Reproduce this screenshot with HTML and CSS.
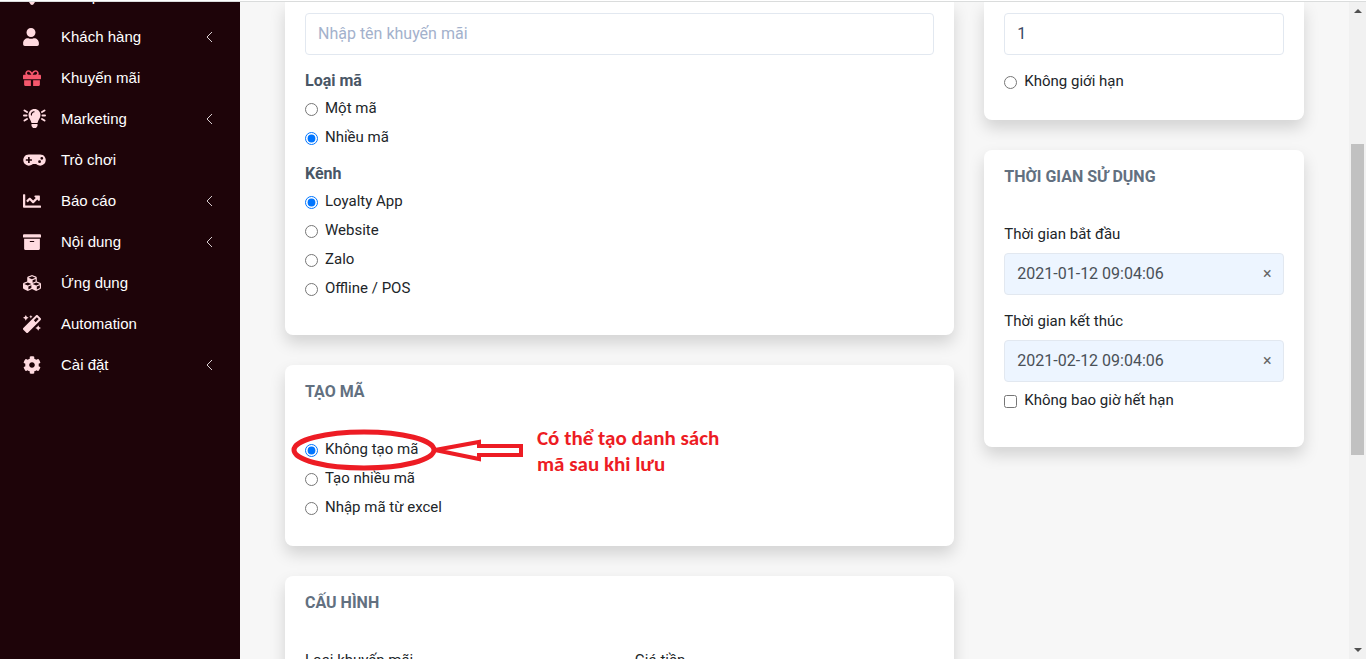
FILE: index.html
```html
<!DOCTYPE html>
<html lang="vi">
<head>
    <meta charset="UTF-8">
    <meta name="viewport" content="width=device-width, initial-scale=1.0">
    <title>Khuyến mãi</title>
    <link rel="stylesheet" href="styles.css">
</head>
<body>

    <div class="page">
        <nav class="sidebar">
            <ul class="menu">
                <li><a href="#">
                    <svg class="icon" width="18" height="18" viewBox="0 0 512 512"><path d="M256 0l256 180-220 320c-18 16-54 16-72 0L0 180z"/></svg>
                    <span>Sản phẩm</span>
                </a></li>
                <li><a href="#">
                    <svg class="icon" width="16" height="18" viewBox="0 0 448 512"><path d="M224 256c70.7 0 128-57.3 128-128S294.7 0 224 0 96 57.3 96 128s57.3 128 128 128zm89.6 32h-16.7c-22.2 10.2-46.9 16-72.9 16s-50.6-5.8-72.9-16h-16.7C60.2 288 0 348.2 0 422.4V464c0 26.5 21.5 48 48 48h352c26.5 0 48-21.5 48-48v-41.6c0-74.2-60.2-134.4-134.4-134.4z"/></svg>
                    <span>Khách hàng</span>
                    <svg class="arrow" width="8" height="12" viewBox="0 0 8 12"><path d="M7 1L2 6l5 5"/></svg>
                </a></li>
                <li class="active"><a href="#">
                    <svg class="icon" width="18" height="18" viewBox="0 0 512 512"><path d="M32 448c0 17.7 14.3 32 32 32h160V320H32v128zm256 32h160c17.7 0 32-14.3 32-32V320H288v160zm192-320h-42.1c6.2-12.1 10.1-25.5 10.1-40 0-48.5-39.5-88-88-88-41.6 0-68.5 21.3-103 68.3-34.5-47-61.4-68.3-103-68.3-48.5 0-88 39.5-88 88 0 14.5 3.8 27.9 10.1 40H32c-17.7 0-32 14.3-32 32v80c0 8.8 7.2 16 16 16h480c8.8 0 16-7.2 16-16v-80c0-17.7-14.3-32-32-32zm-326.1 0c-22.1 0-40-17.9-40-40s17.9-40 40-40c19.9 0 34.6 3.3 86.1 80h-86.1zm206.1 0h-86.1c51.4-76.5 65.7-80 86.1-80 22.1 0 40 17.9 40 40s-17.9 40-40 40z"/></svg>
                    <span>Khuyến mãi</span>
                </a></li>
                <li><a href="#">
                    <svg class="icon" width="23" height="19" viewBox="0 0 23 19"><path d="M11.500 0C8 0 5.500 2.700 5.500 6c0 3.300 2.500 5 3 8h6c.5-3 3-4.700 3-8 0-3.300-2.500-6-6-6zM8 6.500C7.300 4 9 2.200 11.500 2.200v1C9.700 3.200 8.700 4.500 9 6.500zM8.500 15h6v2l-1.500 2h-3L8.500 17z"/><path class="rays" d="M1 6.500h2.500M19.500 6.500H22M1.500 1.500l2.500 1.500M21.500 1.500L19 3M1.500 11.500L4 10M21.500 11.500L19 10"/></svg>
                    <span>Marketing</span>
                    <svg class="arrow" width="8" height="12" viewBox="0 0 8 12"><path d="M7 1L2 6l5 5"/></svg>
                </a></li>
                <li><a href="#">
                    <svg class="icon" width="23" height="18" viewBox="0 0 640 512"><path d="M480 96H160a160 160 0 1 0 114.240 272h91.5A160 160 0 1 0 480 96zM248 268a12 12 0 0 1-12 12h-52v52a12 12 0 0 1-12 12h-24a12 12 0 0 1-12-12v-52H84a12 12 0 0 1-12-12v-24a12 12 0 0 1 12-12h52v-52a12 12 0 0 1 12-12h24a12 12 0 0 1 12 12v52h52a12 12 0 0 1 12 12zm216 76a40 40 0 1 1 40-40 40 40 0 0 1-40 40zm64-96a40 40 0 1 1 40-40 40 40 0 0 1-40 40z"/></svg>
                    <span>Trò chơi</span>
                </a></li>
                <li><a href="#">
                    <svg class="icon" width="18" height="18" viewBox="0 0 512 512"><path d="M496 384H64V80c0-8.840-7.160-16-16-16H16C7.160 64 0 71.160 0 80v336c0 17.670 14.330 32 32 32h464c8.840 0 16-7.160 16-16v-32c0-8.840-7.160-16-16-16zM464 96H345.940c-21.380 0-32.090 25.850-16.970 40.970l32.400 32.400L288 242.750l-73.370-73.370c-12.500-12.500-32.760-12.500-45.250 0l-68.690 68.690c-6.250 6.250-6.250 16.380 0 22.630l22.620 22.620c6.250 6.250 16.380 6.250 22.630 0L192 237.250l73.370 73.370c12.500 12.500 32.760 12.500 45.250 0l96-96 32.400 32.400c15.120 15.120 40.970 4.410 40.970-16.970V112c0-8.840-7.150-16-15.990-16z"/></svg>
                    <span>Báo cáo</span>
                    <svg class="arrow" width="8" height="12" viewBox="0 0 8 12"><path d="M7 1L2 6l5 5"/></svg>
                </a></li>
                <li><a href="#">
                    <svg class="icon" width="18" height="18" viewBox="0 0 512 512"><path d="M32 448c0 17.7 14.3 32 32 32h384c17.7 0 32-14.3 32-32V160H32v288zm160-212c0-6.6 5.4-12 12-12h104c6.6 0 12 5.4 12 12v8c0 6.6-5.4 12-12 12H204c-6.6 0-12-5.4-12-12v-8zM480 32H32C14.3 32 0 46.3 0 64v48c0 8.8 7.2 16 16 16h480c8.8 0 16-7.2 16-16V64c0-17.7-14.3-32-32-32z"/></svg>
                    <span>Nội dung</span>
                    <svg class="arrow" width="8" height="12" viewBox="0 0 8 12"><path d="M7 1L2 6l5 5"/></svg>
                </a></li>
                <li><a href="#">
                    <svg class="icon" width="18" height="18" viewBox="0 0 512 512"><path d="M488.6 250.2L392 214V105.5c0-15-9.3-28.4-23.4-33.7l-100-37.5c-8.1-3.1-17.1-3.1-25.3 0l-100 37.5c-14.1 5.3-23.4 18.7-23.4 33.7V214l-96.6 36.2C9.3 255.5 0 268.9 0 283.9V394c0 13.6 7.7 26.1 19.9 32.2l100 50c10.1 5.1 22.1 5.1 32.2 0l103.9-52 103.9 52c10.1 5.1 22.1 5.1 32.2 0l100-50c12.2-6.1 19.9-18.6 19.9-32.2V283.9c0-15-9.3-28.4-23.4-33.7zM358 214.8l-85 31.9v-68.2l85-37v73.3zM154 104.1l102-38.2 102 38.2v.6l-102 41.4-102-41.4v-.6zm84 291.1l-85 42.5v-79.1l85-38.8v75.4zm0-112l-102 41.4-102-41.4v-.6l102-38.2 102 38.2v.6zm240 112l-85 42.5v-79.1l85-38.8v75.4zm0-112l-102 41.4-102-41.4v-.6l102-38.2 102 38.2v.6z"/></svg>
                    <span>Ứng dụng</span>
                </a></li>
                <li><a href="#">
                    <svg class="icon" width="18" height="18" viewBox="0 0 512 512"><path d="M224 96l16-32 32-16-32-16-16-32-16 32-32 16 32 16 16 32zM80 160l26.660-53.330L160 80l-53.340-26.670L80 0 53.340 53.330 0 80l53.340 26.670L80 160zm352 128l-26.660 53.330L352 368l53.340 26.670L432 448l26.660-53.330L512 368l-53.340-26.670L432 288zm70.620-193.770L417.770 9.380C411.530 3.120 403.340 0 395.150 0c-8.190 0-16.380 3.120-22.630 9.380L9.380 372.520c-12.500 12.500-12.500 32.760 0 45.250l84.850 84.850c6.250 6.250 14.440 9.370 22.620 9.370 8.190 0 16.380-3.120 22.630-9.370l363.140-363.150c12.500-12.480 12.500-32.750 0-45.240zM359.450 203.460l-50.910-50.910 86.600-86.600 50.910 50.910-86.600 86.600z"/></svg>
                    <span>Automation</span>
                </a></li>
                <li><a href="#">
                    <svg class="icon" width="18" height="18" viewBox="0 0 512 512"><path d="M487.4 315.7l-42.6-24.6c4.3-23.2 4.3-47 0-70.2l42.6-24.6c4.9-2.8 7.1-8.6 5.5-14-11.1-35.6-30-67.8-54.7-94.6-3.8-4.1-10-5.1-14.8-2.3L380.8 110c-17.9-15.4-38.5-27.3-60.8-35.1V25.8c0-5.6-3.9-10.5-9.4-11.7-36.7-8.2-74.3-7.8-109.2 0-5.5 1.2-9.4 6.1-9.4 11.7V75c-22.2 7.9-42.8 19.8-60.8 35.1L88.7 85.5c-4.9-2.8-11-1.9-14.8 2.3-24.7 26.7-43.6 58.9-54.7 94.6-1.7 5.4.6 11.2 5.5 14L67.3 221c-4.3 23.2-4.3 47 0 70.2l-42.6 24.6c-4.9 2.8-7.1 8.6-5.5 14 11.1 35.6 30 67.8 54.7 94.6 3.8 4.1 10 5.1 14.8 2.3l42.6-24.6c17.9 15.4 38.5 27.3 60.8 35.1v49.2c0 5.6 3.9 10.5 9.4 11.7 36.7 8.2 74.3 7.8 109.2 0 5.5-1.2 9.4-6.1 9.4-11.7v-49.2c22.2-7.9 42.8-19.8 60.8-35.1l42.6 24.6c4.9 2.8 11 1.9 14.8-2.3 24.7-26.7 43.6-58.9 54.7-94.6 1.5-5.5-.7-11.3-5.6-14.1zM256 336c-44.1 0-80-35.9-80-80s35.9-80 80-80 80 35.9 80 80-35.9 80-80 80z"/></svg>
                    <span>Cài đặt</span>
                    <svg class="arrow" width="8" height="12" viewBox="0 0 8 12"><path d="M7 1L2 6l5 5"/></svg>
                </a></li>
            </ul>
        </nav>

        <main class="content">
            <div class="column column-main">
                <section class="card card-open">
                    <input class="text-input" type="text" placeholder="Nhập tên khuyến mãi" aria-label="Tên khuyến mãi">

                    <h3>Loại mã</h3>
                    <label class="option"><input type="radio" name="code-type"><span>Một mã</span></label>
                    <label class="option"><input type="radio" name="code-type" checked><span>Nhiều mã</span></label>

                    <h3 class="channel-title">Kênh</h3>
                    <label class="option"><input type="radio" name="channel" checked><span>Loyalty App</span></label>
                    <label class="option"><input type="radio" name="channel"><span>Website</span></label>
                    <label class="option"><input type="radio" name="channel"><span>Zalo</span></label>
                    <label class="option"><input type="radio" name="channel"><span>Offline / POS</span></label>
                </section>

                <section class="card">
                    <h2>TẠO MÃ</h2>
                    <label class="option"><input type="radio" name="create" checked><span>Không tạo mã</span></label>
                    <label class="option"><input type="radio" name="create"><span>Tạo nhiều mã</span></label>
                    <label class="option"><input type="radio" name="create"><span>Nhập mã từ excel</span></label>

                    <div class="callout">
                        <svg width="240" height="50" viewBox="0 0 240 50">
                            <ellipse cx="74" cy="25" rx="70" ry="18"/>
                            <path class="pointer" d="M145 25l44-8v4h42v9h-42v4z"/>
                        </svg>
                        <p>Có thể tạo danh sách<br>mã sau khi lưu</p>
                    </div>
                </section>

                <section class="card">
                    <h2>CẤU HÌNH</h2>
                    <div class="fields">
                        <div>
                            <label class="field-label" for="promo-type">Loại khuyến mãi</label>
                            <input class="text-input" type="text" id="promo-type">
                        </div>
                        <div>
                            <label class="field-label" for="price">Giá tiền</label>
                            <input class="text-input" type="text" id="price">
                        </div>
                    </div>
                </section>
            </div>

            <div class="column column-side">
                <section class="card card-open card-limit">
                    <input class="text-input" type="text" value="1" aria-label="Số lần sử dụng">
                    <label class="option"><input type="radio" name="limit"><span>Không giới hạn</span></label>
                </section>

                <section class="card card-time">
                    <h2>THỜI GIAN SỬ DỤNG</h2>
                    <label class="field-label" for="start">Thời gian bắt đầu</label>
                    <div class="date-box">
                        <input type="text" id="start" value="2021-01-12 09:04:06">
                        <button type="button" aria-label="Xóa">×</button>
                    </div>
                    <label class="field-label" for="end">Thời gian kết thúc</label>
                    <div class="date-box">
                        <input type="text" id="end" value="2021-02-12 09:04:06">
                        <button type="button" aria-label="Xóa">×</button>
                    </div>
                    <label class="option"><input type="checkbox" name="never"><span>Không bao giờ hết hạn</span></label>
                </section>
            </div>
        </main>

        <div class="scrollbar">
            <svg width="17" height="17" viewBox="0 0 17 17"><path d="M5 11l4-4 4 4z"/></svg>
            <div class="track">
                <div class="thumb"></div>
            </div>
            <svg width="17" height="17" viewBox="0 0 17 17"><path d="M5 6l4 4 4-4z"/></svg>
        </div>
    </div>

</body>
</html>
```
FILE: styles.css
```css
* {
    box-sizing: border-box;
}

body {
    margin: 0;
    font-family: Roboto, sans-serif;
    font-size: 15px;
    color: #212529;
    background-color: #fff;
}

h2, h3, p, ul {
    margin: 0;
    padding: 0;
}

.page {
    display: flex;
    height: 100vh;
    padding-top: 1px;
    border-bottom: 1px solid #fff;
    overflow: hidden;
}

.sidebar,
.content,
.scrollbar {
    border-top: 1px solid #dadcdc;
}

/* sidebar */
.sidebar {
    flex: 0 0 240px;
    background-color: #1e0409;
    overflow: hidden;
}

.menu {
    list-style: none;
    margin-top: -27px;
}

.menu a {
    display: grid;
    grid-template-columns: 24px 1fr 8px;
    column-gap: 14px;
    align-items: center;
    height: 41px;
    padding: 0 27px 0 23px;
    font-family: "Liberation Sans", Arial, sans-serif;
    font-size: 15px;
    color: #fff;
    text-decoration: none;
}

.icon {
    fill: #ffdbe0;
}

.active .icon {
    fill: #f5576c;
}

.rays {
    fill: none;
    stroke: #ffdbe0;
    stroke-width: 2;
    stroke-linecap: round;
}

.arrow path {
    fill: none;
    stroke: #d8cfd1;
}

/* content */
.content {
    flex: 1;
    display: grid;
    grid-template-columns: repeat(12, 1fr);
    column-gap: 30px;
    align-items: start;
    padding: 0 45px;
    background-color: #f7f7f7;
    overflow: hidden;
}

.column {
    display: flex;
    flex-direction: column;
    gap: 30px;
}

.column-main {
    grid-column: span 8;
}

.column-side {
    grid-column: span 4;
}

.card {
    position: relative;
    padding: 15px 20px 23px;
    background-color: #fff;
    border-radius: 8px;
    box-shadow: 0 8px 16px rgba(0, 0, 0, 0.15);
}

.card-open {
    padding-top: 11px;
    padding-bottom: 31px;
    border-radius: 0 0 8px 8px;
}

.card-limit {
    padding-bottom: 23px;
}

.card-time {
    padding-bottom: 31px;
}

.card h2 {
    margin-bottom: 32px;
    font-size: 16px;
    line-height: 24px;
    color: #627080;
}

.card h3 {
    margin: 14px 0 2px;
    font-size: 16px;
    line-height: 24px;
    color: #495666;
}

.card .channel-title {
    margin-top: 9px;
}

.option {
    display: flex;
    align-items: center;
    gap: 7px;
    height: 29px;
}

.option input {
    width: 13px;
    height: 13px;
    margin: 0;
}

.option span {
    padding-bottom: 4px;
}

.text-input,
.date-box {
    display: block;
    width: 100%;
    height: 42px;
    padding: 0 12px 2px;
    border: 1px solid #e2e8f0;
    border-radius: 4px;
    font-family: inherit;
    font-size: 16px;
    color: #3b4863;
    background-color: #fff;
}

.text-input::placeholder {
    color: #a3b1cc;
}

.card-limit .option {
    margin-top: 13px;
}

.fields {
    display: grid;
    grid-template-columns: 1fr 1fr;
    gap: 30px;
}

.field-label {
    display: block;
    margin-bottom: 8px;
    line-height: 26px;
}

.date-box {
    display: flex;
    align-items: center;
    background-color: #edf5ff;
}

.date-box input {
    flex: 1;
    min-width: 0;
    padding: 0;
    border: none;
    font-family: inherit;
    font-size: 16px;
    color: #495057;
    background: none;
}

.date-box button {
    width: 8px;
    padding: 0;
    border: none;
    font-family: inherit;
    font-size: 16px;
    color: #666;
    background: none;
    cursor: pointer;
}

.card-time .field-label {
    line-height: 22px;
}

.card-time h2 {
    margin-bottom: 34px;
}

.date-box + .field-label {
    margin-top: 15px;
}

.date-box + .option {
    margin-top: 5px;
}

/* red note over the card */
.callout {
    position: absolute;
    top: 60px;
    left: 5px;
    display: flex;
    gap: 7px;
    pointer-events: none;
}

.callout svg {
    fill: none;
    stroke: #ed1c24;
    stroke-width: 5;
}

.callout .pointer {
    stroke-width: 4;
}

.callout p {
    font-family: Carlito, Lato, "Open Sans", sans-serif;
    font-size: 21px;
    font-weight: bold;
    line-height: 26px;
    color: #ed1c24;
    white-space: nowrap;
}

/* scrollbar */
.scrollbar {
    flex: 0 0 17px;
    display: flex;
    flex-direction: column;
    background-color: #f1f1f1;
}

.scrollbar svg {
    fill: #505050;
}

.track {
    flex: 1;
    display: grid;
    grid-template-rows: 20fr 50fr 30fr;
    padding: 0 2px;
}

.thumb {
    grid-row: 2;
    background-color: #c1c1c1;
}
```
